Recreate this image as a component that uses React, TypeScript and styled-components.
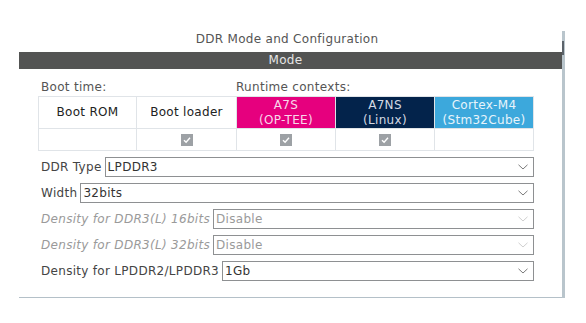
import React from "react";
import styled, { createGlobalStyle } from "styled-components";

const GlobalStyle = createGlobalStyle`
    html, body {
        margin: 0;
        padding: 0;
        background: #ffffff;
    }
    body {
        font-family: "DejaVu Sans", "Liberation Sans", sans-serif;
        font-size: 12px;
        letter-spacing: 0.3px;
    }
`;

const Page = styled.div`
    padding-top: 31px;
    padding-left: 19px;
    width: 586px;
    height: 323px;
    box-sizing: border-box;
`;

const Panel = styled.div`
    display: flex;
    flex-direction: row;
    width: 546px;
`;

const PanelBody = styled.div`
    flex: 1;
    display: flex;
    flex-direction: column;
    border-bottom: 1px solid #b4c0c8;
    padding-bottom: 16px;
`;

const Scrollbar = styled.div`
    width: 3px;
    background-color: #b9c5cc;
    display: flex;
    flex-direction: column;
`;

const ScrollThumb = styled.div`
    width: 2px;
    height: 14px;
    margin-top: 10px;
    background-color: #5c636a;
`;

const Title = styled.div`
    height: 21px;
    line-height: 16px;
    text-align: center;
    color: #555555;
    padding-right: 7px;
    box-sizing: border-box;
`;

const ModeBar = styled.div`
    height: 17px;
    line-height: 17px;
    background-color: #535453;
    color: #e6e6e6;
    text-align: center;
    padding-right: 10px;
`;

const Content = styled.div`
    padding-left: 19px;
    width: 496px;
`;

const columns = "98px 100px 99px 99px 99px";

const ContextLabels = styled.div`
    display: grid;
    grid-template-columns: ${columns};
    height: 27px;
    align-items: end;
    color: #555555;
`;

const ContextLabel = styled.div<{ $span: number }>`
    grid-column: span ${(p) => p.$span};
    padding-left: ${(p) => (p.$span === 2 ? 3 : 0)}px;
    line-height: 14px;
    padding-bottom: 2px;
`;

const Table = styled.div`
    display: grid;
    grid-template-columns: ${columns};
    grid-template-rows: 32px 22px;
    border-top: 1px solid #e0e4e8;
    border-left: 1px solid #e0e4e8;
`;

const HeadCell = styled.div<{ $bg?: string; $fg?: string }>`
    display: flex;
    flex-direction: column;
    align-items: center;
    justify-content: center;
    line-height: 15px;
    background-color: ${(p) => p.$bg || "#ffffff"};
    color: ${(p) => p.$fg || "#222222"};
    border-right: 1px solid #e0e4e8;
    border-bottom: 1px solid #e0e4e8;
    font-size: 12px;
`;

const CheckCell = styled.div`
    display: flex;
    align-items: center;
    justify-content: center;
    border-right: 1px solid #e0e4e8;
    border-bottom: 1px solid #e0e4e8;
`;

const CheckBox = styled.span`
    width: 12px;
    height: 12px;
    background-color: #9da1a5;
    display: flex;
    align-items: center;
    justify-content: center;
`;

const Form = styled.div`
    display: flex;
    flex-direction: column;
    gap: 6px;
    margin-top: 6px;
`;

const Row = styled.div`
    display: flex;
    align-items: center;
    height: 20px;
    padding-left: 3px;
`;

const Label = styled.span<{ $disabled?: boolean }>`
    color: ${(p) => (p.$disabled ? "#9a9a9a" : "#444444")};
    font-style: ${(p) => (p.$disabled ? "italic" : "normal")};
    white-space: nowrap;
    margin-right: 3px;
`;

const Select = styled.div<{ $disabled?: boolean }>`
    flex: 1;
    height: 20px;
    box-sizing: border-box;
    border: 1px solid #8e9092;
    display: flex;
    align-items: center;
    justify-content: space-between;
    padding: 0 5px 0 2px;
    color: ${(p) => (p.$disabled ? "#9a9a9a" : "#333333")};
    background: #ffffff;
`;

function Check() {
    return (
        <CheckBox>
            <svg width="10" height="10" viewBox="0 0 10 10">
                <path d="M2 5.2 L4.1 7.3 L8 2.8" fill="none" stroke="#ffffff" strokeWidth="1.4" />
            </svg>
        </CheckBox>
    );
}

function Chevron({ disabled }: { disabled?: boolean }) {
    return (
        <svg width="10" height="6" viewBox="0 0 10 6">
            <path
                d="M0.5 0.8 L5 5 L9.5 0.8"
                fill="none"
                stroke={disabled ? "#cfcfcf" : "#7a7a7a"}
                strokeWidth="1"
            />
        </svg>
    );
}

const fields = [
    { label: "DDR Type", value: "LPDDR3" },
    { label: "Width", value: "32bits" },
    { label: "Density for DDR3(L) 16bits", value: "Disable", disabled: true },
    { label: "Density for DDR3(L) 32bits", value: "Disable", disabled: true },
    { label: "Density for LPDDR2/LPDDR3", value: "1Gb" },
];

export default function App() {
    return (
        <>
            <GlobalStyle />
            <Page>
                <Panel>
                    <PanelBody>
                        <Title>DDR Mode and Configuration</Title>
                        <ModeBar>Mode</ModeBar>
                        <Content>
                            <ContextLabels>
                                <ContextLabel $span={2}>Boot time:</ContextLabel>
                                <ContextLabel $span={3}>Runtime contexts:</ContextLabel>
                            </ContextLabels>
                            <Table>
                                <HeadCell>Boot ROM</HeadCell>
                                <HeadCell>Boot loader</HeadCell>
                                <HeadCell $bg="#e6007e" $fg="#f8d8ea">
                                    <span>A7S</span>
                                    <span>(OP-TEE)</span>
                                </HeadCell>
                                <HeadCell $bg="#03234b" $fg="#d4d9e2">
                                    <span>A7NS</span>
                                    <span>(Linux)</span>
                                </HeadCell>
                                <HeadCell $bg="#3ca8dc" $fg="#e8f4fb">
                                    <span>Cortex-M4</span>
                                    <span>(Stm32Cube)</span>
                                </HeadCell>
                                <CheckCell />
                                <CheckCell><Check /></CheckCell>
                                <CheckCell><Check /></CheckCell>
                                <CheckCell><Check /></CheckCell>
                                <CheckCell />
                            </Table>
                            <Form>
                                {fields.map((f) => (
                                    <Row key={f.label}>
                                        <Label $disabled={f.disabled}>{f.label}</Label>
                                        <Select $disabled={f.disabled}>
                                            <span>{f.value}</span>
                                            <Chevron disabled={f.disabled} />
                                        </Select>
                                    </Row>
                                ))}
                            </Form>
                        </Content>
                    </PanelBody>
                    <Scrollbar>
                        <ScrollThumb />
                    </Scrollbar>
                </Panel>
            </Page>
        </>
    );
}
